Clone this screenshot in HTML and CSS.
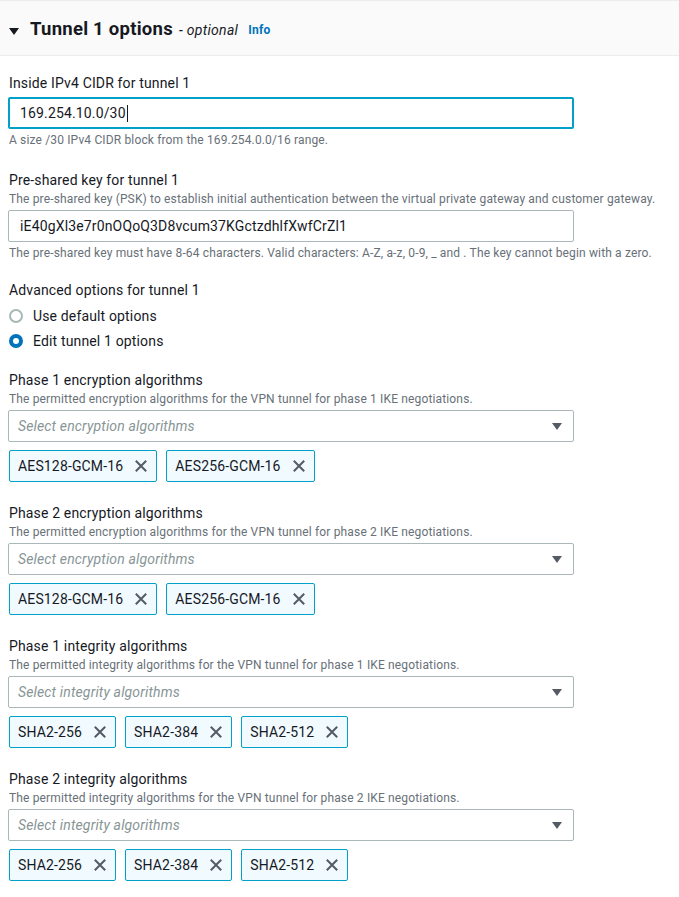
FILE: index.html
```html
<!DOCTYPE html>
<html lang="en">
<head>
<meta charset="utf-8">
<title>Tunnel 1 options</title>
<link rel="stylesheet" href="styles.css">
</head>
<body>
<div class="panel">
  <div class="header">
    <svg class="caret" width="10" height="7" viewBox="0 0 10 7"><path d="M0 0 H10 L5 7 Z"/></svg>
    <h2 class="title">Tunnel 1 options</h2>
    <span class="optional">- optional</span>
    <a class="info">Info</a>
  </div>
  <div class="content">
    <div class="field f-first">
      <div class="label">Inside IPv4 CIDR for tunnel 1</div>
      <div class="input focused">169.254.10.0/30<span class="cursor"></span></div>
      <div class="hint">A size /30 IPv4 CIDR block from the 169.254.0.0/16 range.</div>
    </div>
    <div class="field f-second">
      <div class="label">Pre-shared key for tunnel 1</div>
      <div class="desc">The pre-shared key (PSK) to establish initial authentication between the virtual private gateway and customer gateway.</div>
      <div class="input">iE40gXl3e7r0nOQoQ3D8vcum37KGctzdhlfXwfCrZl1</div>
      <div class="hint">The pre-shared key must have 8-64 characters. Valid characters: A-Z, a-z, 0-9, _ and . The key cannot begin with a zero.</div>
    </div>
    <div class="field f-adv">
      <div class="label">Advanced options for tunnel 1</div>
      <div class="radios">
        <div class="radio-row"><span class="radio"></span><span>Use default options</span></div>
        <div class="radio-row"><span class="radio checked"></span><span>Edit tunnel 1 options</span></div>
      </div>
    </div>
    <div class="field">
      <div class="label">Phase 1 encryption algorithms</div>
      <div class="desc">The permitted encryption algorithms for the VPN tunnel for phase 1 IKE negotiations.</div>
      <div class="select"><span class="placeholder">Select encryption algorithms</span><svg class="sel-caret" width="10" height="7" viewBox="0 0 10 7"><path d="M0 0 H10 L5 7 Z"/></svg></div>
      <div class="tokens">
        <div class="token"><span>AES128-GCM-16</span><svg class="x" width="12" height="12" viewBox="0 0 12 12"><path d="M0.8 0.8 L11.2 11.2 M11.2 0.8 L0.8 11.2"/></svg></div>
        <div class="token"><span>AES256-GCM-16</span><svg class="x" width="12" height="12" viewBox="0 0 12 12"><path d="M0.8 0.8 L11.2 11.2 M11.2 0.8 L0.8 11.2"/></svg></div>
      </div>
    </div>
    <div class="field">
      <div class="label">Phase 2 encryption algorithms</div>
      <div class="desc">The permitted encryption algorithms for the VPN tunnel for phase 2 IKE negotiations.</div>
      <div class="select"><span class="placeholder">Select encryption algorithms</span><svg class="sel-caret" width="10" height="7" viewBox="0 0 10 7"><path d="M0 0 H10 L5 7 Z"/></svg></div>
      <div class="tokens">
        <div class="token"><span>AES128-GCM-16</span><svg class="x" width="12" height="12" viewBox="0 0 12 12"><path d="M0.8 0.8 L11.2 11.2 M11.2 0.8 L0.8 11.2"/></svg></div>
        <div class="token"><span>AES256-GCM-16</span><svg class="x" width="12" height="12" viewBox="0 0 12 12"><path d="M0.8 0.8 L11.2 11.2 M11.2 0.8 L0.8 11.2"/></svg></div>
      </div>
    </div>
    <div class="field">
      <div class="label">Phase 1 integrity algorithms</div>
      <div class="desc">The permitted integrity algorithms for the VPN tunnel for phase 1 IKE negotiations.</div>
      <div class="select"><span class="placeholder">Select integrity algorithms</span><svg class="sel-caret" width="10" height="7" viewBox="0 0 10 7"><path d="M0 0 H10 L5 7 Z"/></svg></div>
      <div class="tokens">
        <div class="token"><span>SHA2-256</span><svg class="x" width="12" height="12" viewBox="0 0 12 12"><path d="M0.8 0.8 L11.2 11.2 M11.2 0.8 L0.8 11.2"/></svg></div>
        <div class="token"><span>SHA2-384</span><svg class="x" width="12" height="12" viewBox="0 0 12 12"><path d="M0.8 0.8 L11.2 11.2 M11.2 0.8 L0.8 11.2"/></svg></div>
        <div class="token"><span>SHA2-512</span><svg class="x" width="12" height="12" viewBox="0 0 12 12"><path d="M0.8 0.8 L11.2 11.2 M11.2 0.8 L0.8 11.2"/></svg></div>
      </div>
    </div>
    <div class="field">
      <div class="label">Phase 2 integrity algorithms</div>
      <div class="desc">The permitted integrity algorithms for the VPN tunnel for phase 2 IKE negotiations.</div>
      <div class="select"><span class="placeholder">Select integrity algorithms</span><svg class="sel-caret" width="10" height="7" viewBox="0 0 10 7"><path d="M0 0 H10 L5 7 Z"/></svg></div>
      <div class="tokens">
        <div class="token"><span>SHA2-256</span><svg class="x" width="12" height="12" viewBox="0 0 12 12"><path d="M0.8 0.8 L11.2 11.2 M11.2 0.8 L0.8 11.2"/></svg></div>
        <div class="token"><span>SHA2-384</span><svg class="x" width="12" height="12" viewBox="0 0 12 12"><path d="M0.8 0.8 L11.2 11.2 M11.2 0.8 L0.8 11.2"/></svg></div>
        <div class="token"><span>SHA2-512</span><svg class="x" width="12" height="12" viewBox="0 0 12 12"><path d="M0.8 0.8 L11.2 11.2 M11.2 0.8 L0.8 11.2"/></svg></div>
      </div>
    </div>
  </div>
</div>
</body>
</html>
```

FILE: styles.css
```css
* { box-sizing: border-box; }
html, body {
  margin: 0;
  padding: 0;
  background: #ffffff;
}
body {
  font-family: Roboto, "Liberation Sans", Arial, sans-serif;
  color: #16191f;
  font-size: 14px;
  letter-spacing: 0.15px;
}
.header {
  height: 56px;
  background: #fafafa;
  border-top: 1px solid #eaeded;
  border-bottom: 1px solid #eaeded;
  display: flex;
  align-items: center;
  padding-left: 9px;
  padding-top: 1px;
}
.caret {
  fill: #16191f;
  margin-top: 6px;
  margin-right: 11px;
}
.title {
  margin: 0;
  font-size: 18.5px;
  font-weight: 700;
  line-height: 22px;
  letter-spacing: 0.25px;
}
.optional {
  font-style: italic;
  font-size: 14px;
  margin-left: 6px;
  margin-top: 2px;
  letter-spacing: 0.3px;
}
.info {
  color: #0073bb;
  font-weight: 700;
  font-size: 12px;
  margin-left: 10px;
  margin-top: 2px;
  letter-spacing: 0.3px;
}
.content {
  padding: 16px 0 0 8px;
  width: 574px;
}
.field {
  margin-bottom: 20px;
}
.f-first { margin-bottom: 21px; }
.f-second { margin-bottom: 18px; }
.f-adv { margin-bottom: 16px; }
.label {
  font-size: 14px;
  line-height: 22px;
  padding-left: 1px;
}
.desc {
  font-size: 12px;
  line-height: 16px;
  color: #687078;
  padding-left: 1px;
  white-space: nowrap;
}
.hint {
  font-size: 12px;
  line-height: 16px;
  color: #687078;
  padding-left: 1px;
  margin-top: 3px;
  white-space: nowrap;
}
.input {
  height: 32px;
  border: 1px solid #aab7b8;
  border-radius: 2px;
  display: flex;
  align-items: center;
  padding-left: 11px;
  font-size: 14px;
  margin-top: 3px;
}
.input.focused {
  border: 2px solid #00a1c9;
  padding-left: 10px;
}
.cursor {
  display: inline-block;
  width: 1px;
  height: 17px;
  background: #16191f;
  margin-left: 1px;
}
.radios {
  margin-top: 2px;
}
.radio-row {
  display: flex;
  align-items: center;
  height: 25px;
  padding-left: 1px;
}
.radio {
  width: 14px;
  height: 14px;
  border-radius: 50%;
  border: 2px solid #aab7b8;
  margin-right: 10px;
  background: #fff;
  flex: none;
}
.radio.checked {
  border: 4.5px solid #0073bb;
}
.select {
  height: 32px;
  border: 1px solid #aab7b8;
  border-radius: 2px;
  display: flex;
  align-items: center;
  justify-content: space-between;
  padding: 0 11px 0 9px;
  margin-top: 3px;
}
.placeholder {
  color: #879596;
  font-style: italic;
}
.sel-caret {
  fill: #545b64;
}
.tokens {
  display: flex;
  gap: 9px;
  margin-top: 8px;
  padding-left: 1px;
}
.token {
  height: 32px;
  display: flex;
  align-items: center;
  background: #f1faff;
  border: 1px solid #00a1c9;
  border-radius: 2px;
  padding: 0 9px 0 8px;
}
.token span {
  margin-right: 12px;
}
.x {
  stroke: #545b64;
  stroke-width: 2;
  fill: none;
}
```
